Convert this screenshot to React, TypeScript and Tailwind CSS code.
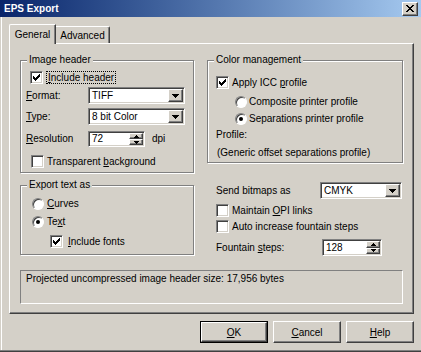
import React from "react";

const sunken =
  "border border-t-[#808080] border-l-[#808080] border-b-white border-r-white shadow-[inset_1px_1px_0_#404040,inset_-1px_-1px_0_#d4d0c8]";
const raised =
  "border border-t-white border-l-white border-b-[#404040] border-r-[#404040] shadow-[inset_-1px_-1px_0_#808080,inset_1px_1px_0_#d4d0c8]";

function U({ children }: { children: React.ReactNode }) {
  return <span className="underline underline-offset-[1px]">{children}</span>;
}

function CheckBox({ checked = false }: { checked?: boolean }) {
  return (
    <div className={`w-[13px] h-[13px] shrink-0 bg-white flex items-center justify-center ${sunken}`}>
      {checked && (
        <svg width="7" height="7" viewBox="0 0 7 7" shapeRendering="crispEdges">
          <path
            d="M0 2h1v3H0z M1 3h1v3H1z M2 4h1v3H2z M3 3h1v3H3z M4 2h1v3H4z M5 1h1v3H5z M6 0h1v3H6z"
            fill="#000"
          />
        </svg>
      )}
    </div>
  );
}

function Radio({ on = false }: { on?: boolean }) {
  return (
    <div className="w-[12px] h-[12px] shrink-0 rounded-full bg-white flex items-center justify-center border border-t-[#808080] border-l-[#808080] border-b-white border-r-white shadow-[inset_1px_1px_0_#404040]">
      {on && <div className="w-[4px] h-[4px] rounded-full bg-black" />}
    </div>
  );
}

function DownArrow() {
  return (
    <svg width="7" height="4" viewBox="0 0 7 4" shapeRendering="crispEdges">
      <path d="M0 0h7v1H6v1H5v1H4v1H3V3H2V2H1V1H0z" fill="#000" />
    </svg>
  );
}

function Combo({ value, className }: { value: string; className: string }) {
  return (
    <div className={`flex bg-white p-[1px] ${sunken} ${className}`}>
      <div className="flex-1 flex items-center pl-[2px] leading-[12px]">{value}</div>
      <div className={`w-[15px] h-full flex items-center justify-center bg-[#d4d0c8] ${raised}`}>
        <DownArrow />
      </div>
    </div>
  );
}

function Spinner({ value, className }: { value: string; className: string }) {
  return (
    <div className={`flex bg-white p-[1px] ${sunken} ${className}`}>
      <div className="flex-1 flex items-center pl-[2px] leading-[12px]">{value}</div>
      <div className="w-[14px] h-full flex flex-col">
        <div className={`flex-1 flex items-center justify-center bg-[#d4d0c8] ${raised}`}>
          <svg width="5" height="3" viewBox="0 0 5 3" shapeRendering="crispEdges">
            <path d="M2 0h1v1h1v1h1v1H0V2h1V1h1z" fill="#000" />
          </svg>
        </div>
        <div className={`flex-1 flex items-center justify-center bg-[#d4d0c8] ${raised}`}>
          <svg width="5" height="3" viewBox="0 0 5 3" shapeRendering="crispEdges">
            <path d="M0 0h5v1H4v1H3v1H2V2H1V1H0z" fill="#000" />
          </svg>
        </div>
      </div>
    </div>
  );
}

function Group({
  label,
  className,
  children,
}: {
  label: string;
  className: string;
  children: React.ReactNode;
}) {
  return (
    <div
      className={`relative flex flex-col border border-[#808080] shadow-[inset_1px_1px_0_#fff,1px_1px_0_#fff] ${className}`}
    >
      <span className="absolute -top-[7px] left-[6px] px-[2px] bg-[#d4d0c8] leading-[12px]">{label}</span>
      {children}
    </div>
  );
}

function Button({ children, isDefault = false }: { children: React.ReactNode; isDefault?: boolean }) {
  if (isDefault) {
    return (
      <div className="w-[68px] h-[22px] border border-black">
        <div className={`w-full h-full flex items-center justify-center bg-[#d4d0c8] ${raised}`}>{children}</div>
      </div>
    );
  }
  return (
    <div className={`w-[68px] h-[22px] flex items-center justify-center bg-[#d4d0c8] ${raised}`}>{children}</div>
  );
}

export default function App() {
  return (
    <div className="w-[421px] h-[352px] bg-[#d4d0c8] flex flex-col overflow-hidden text-black text-[10px] font-['Liberation_Sans',Arial,sans-serif] shadow-[inset_0_-1px_0_#404040,inset_0_-2px_0_#808080,inset_1px_0_0_#d4d0c8,inset_2px_0_0_#fff]">
      {/* title bar */}
      <div className="h-[17px] shrink-0 flex items-center justify-between pl-[4px] pr-[3px] bg-linear-to-r from-[#0a246a] to-[#a6caf0]">
        <span className="text-white font-bold leading-[12px]">EPS Export</span>
        <div className={`w-[16px] h-[14px] flex items-center justify-center bg-[#d4d0c8] ${raised}`}>
          <svg width="8" height="7" viewBox="0 0 8 7" shapeRendering="crispEdges">
            <path
              d="M0 0h2v1H0z M6 0h2v1H6z M1 1h2v1H1z M5 1h2v1H5z M2 2h4v1H2z M3 3h2v1H3z M2 4h4v1H2z M1 5h2v1H1z M5 5h2v1H5z M0 6h2v1H0z M6 6h2v1H6z"
              fill="#000"
            />
          </svg>
        </div>
      </div>

      {/* tabs */}
      <div className="flex items-end mt-[7px] ml-[9px] h-[19px]">
        <div className="relative z-10 -mb-[1px] w-[47px] h-[20px] flex items-center justify-center pb-[1px] bg-[#d4d0c8] rounded-tl-[2px] border-t border-l border-r border-t-white border-l-white border-r-[#404040] shadow-[inset_-1px_0_0_#808080]">
          General
        </div>
        <div className="w-[54px] h-[17px] flex items-center justify-center bg-[#d4d0c8] rounded-tr-[2px] border-t border-r border-t-white border-r-[#404040] shadow-[inset_-1px_0_0_#808080]">
          Advanced
        </div>
      </div>

      {/* tab panel */}
      <div className="ml-[9px] w-[405px] h-[271px] flex flex-col pl-[10px] pt-[16px] border border-t-white border-l-white border-b-[#404040] border-r-[#404040] shadow-[inset_-1px_-1px_0_#808080]">
        <div className="flex h-[197px] gap-[13px]">
          {/* left column */}
          <div className="flex flex-col w-[174px]">
            <Group label="Image header" className="h-[113px]">
              <div className="flex items-center h-[13px] mt-[10px] ml-[9px]">
                <CheckBox checked />
                <span className="ml-[3px] px-[1px] leading-[11px] border border-dotted border-black">
                  <U>I</U>nclude header
                </span>
              </div>
              <div className="flex items-center h-[17px] mt-[3px] ml-[5px]">
                <span className="w-[62px] leading-[12px]">
                  <U>F</U>ormat:
                </span>
                <Combo value="TIFF" className="w-[97px] h-[17px]" />
              </div>
              <div className="flex items-center h-[17px] mt-[4px] ml-[5px]">
                <span className="w-[62px] leading-[12px]">
                  <U>T</U>ype:
                </span>
                <Combo value="8 bit Color" className="w-[97px] h-[17px]" />
              </div>
              <div className="flex items-center h-[16px] mt-[6px] ml-[5px]">
                <span className="w-[62px] leading-[12px]">
                  <U>R</U>esolution
                </span>
                <Spinner value="72" className="w-[57px] h-[16px]" />
                <span className="ml-[7px] leading-[12px]">dpi</span>
              </div>
              <div className="flex items-center h-[13px] mt-[8px] ml-[10px]">
                <CheckBox />
                <span className="ml-[3px] leading-[12px]">
                  Transparent <U>b</U>ackground
                </span>
              </div>
            </Group>

            <Group label="Export text as" className="h-[70px] mt-[12px]">
              <div className="flex items-center h-[12px] mt-[12px] ml-[11px]">
                <Radio />
                <span className="ml-[3px] leading-[12px]">
                  <U>C</U>urves
                </span>
              </div>
              <div className="flex items-center h-[12px] mt-[6px] ml-[11px]">
                <Radio on />
                <span className="ml-[3px] leading-[12px]">
                  Te<U>x</U>t
                </span>
              </div>
              <div className="flex items-center h-[13px] mt-[7px] ml-[29px]">
                <CheckBox checked />
                <span className="ml-[5px] leading-[12px]">
                  <U>I</U>nclude fonts
                </span>
              </div>
            </Group>
          </div>

          {/* right column */}
          <div className="flex flex-col w-[196px]">
            <Group label="Color management" className="h-[103px]">
              <div className="flex items-center h-[13px] mt-[15px] ml-[8px]">
                <CheckBox checked />
                <span className="ml-[3px] leading-[12px]">
                  Apply ICC <U>p</U>rofile
                </span>
              </div>
              <div className="flex items-center h-[12px] mt-[7px] ml-[27px]">
                <Radio />
                <span className="ml-[2px] leading-[12px]">Composite printer profile</span>
              </div>
              <div className="flex items-center h-[12px] mt-[5px] ml-[27px]">
                <Radio on />
                <span className="ml-[2px] leading-[12px]">Separations printer profile</span>
              </div>
              <div className="h-[12px] mt-[4px] ml-[8px] leading-[12px]">Profile:</div>
              <div className="h-[12px] mt-[6px] ml-[9px] leading-[12px]">(Generic offset separations profile)</div>
            </Group>

            <div className="flex items-center h-[17px] mt-[19px] ml-[9px]">
              <span className="w-[104px] leading-[12px]">Send bitmaps as</span>
              <Combo value="CMYK" className="w-[82px] h-[17px]" />
            </div>
            <div className="flex items-center h-[13px] mt-[5px] ml-[9px]">
              <CheckBox />
              <span className="ml-[3px] leading-[12px]">
                Maintain <U>O</U>PI links
              </span>
            </div>
            <div className="flex items-center h-[13px] mt-[3px] ml-[9px]">
              <CheckBox />
              <span className="ml-[3px] leading-[12px]">Auto increase fountain steps</span>
            </div>
            <div className="flex items-center h-[17px] mt-[6px] ml-[9px]">
              <span className="w-[106px] leading-[12px]">
                Fountain <U>s</U>teps:
              </span>
              <Spinner value="128" className="w-[60px] h-[17px]" />
            </div>
          </div>
        </div>

        {/* info box */}
        <div className="w-[383px] h-[34px] mt-[13px] pl-[5px] pt-[2px] leading-[12px] border border-t-[#808080] border-l-[#808080] border-b-white border-r-white">
          Projected uncompressed image header size: 17,956 bytes
        </div>
      </div>

      {/* buttons */}
      <div className="flex justify-end gap-[5px] pr-[7px] mt-[7px]">
        <Button isDefault>
          <U>O</U>K
        </Button>
        <Button>
          <U>C</U>ancel
        </Button>
        <Button>
          <U>H</U>elp
        </Button>
      </div>
    </div>
  );
}
